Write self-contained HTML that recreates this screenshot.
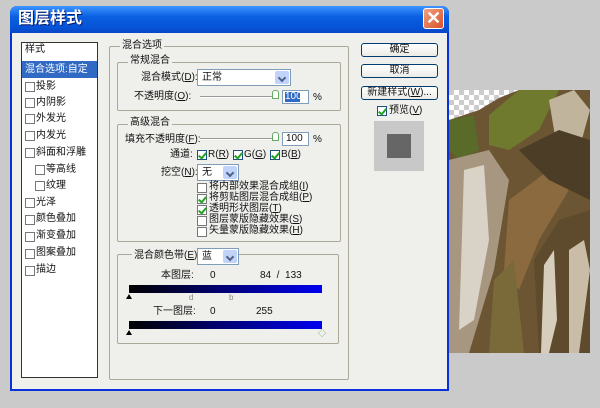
<!DOCTYPE html>
<html><head><meta charset="utf-8"><style>
*{margin:0;padding:0;box-sizing:border-box}
body{width:600px;height:408px;background:#cacaca;position:relative;overflow:hidden;font-family:"Liberation Sans","Noto Sans CJK SC",sans-serif;font-size:10px;color:#111}
.a{position:absolute;white-space:nowrap;line-height:12px}
.cb{position:absolute;width:10px;height:10px;border:1px solid #1c5180;background:#fff}
.ck::after{content:"";position:absolute;left:2px;top:0px;width:3px;height:6px;border:solid #21a121;border-width:0 2px 2px 0;transform:rotate(40deg)}
.grp{position:absolute;border:1px solid #aca899;border-radius:2px}
.lg{position:absolute;background:#efefec;padding:0 2px;line-height:12px}
.sel{position:absolute;background:#fff;border:1px solid #7f9db9}
.dd{position:absolute;right:1px;top:1px;bottom:1px;width:14px;background:#c1d3fb;border-radius:2px}
.dd::after{content:"";position:absolute;left:4px;top:4px;width:4px;height:4px;border:solid #4d6185;border-width:0 2px 2px 0;transform:rotate(45deg)}
.btn{position:absolute;left:361px;width:77px;height:14px;border:1px solid #003c74;border-radius:3px;background:linear-gradient(#fff,#ecebe6);text-align:center;line-height:12px}
.tri{position:absolute;width:0;height:0;border-left:3px solid transparent;border-right:3px solid transparent;border-bottom:5px solid #000}
</style></head><body>
<div style="position:absolute;left:10px;top:6px;width:439px;height:385px;background:#0831d9;border-radius:7px 7px 0 0"></div>
<div style="position:absolute;left:10px;top:6px;width:439px;height:27px;border-radius:7px 7px 0 0;background:linear-gradient(#3d95ff,#0a5fe0 40%,#0653d6 80%,#0846c6)"></div>
<div class="a" style="left:18px;top:10px;font-size:16px;line-height:18px;color:#fff;font-weight:bold;text-shadow:1px 1px #0a1a6a">图层样式</div>
<div style="position:absolute;left:423px;top:8px;width:21px;height:21px;border:1px solid #fff;border-radius:3px;background:linear-gradient(135deg,#f0a080,#d8522a)"></div>
<div class="a" style="left:423px;top:8px;width:21px;height:21px;line-height:21px;text-align:center;color:#fff;font-size:18px;font-weight:bold">✕</div>
<div style="position:absolute;left:12px;top:33px;width:435px;height:356px;background:#efefec"></div>
<div style="position:absolute;left:21px;top:42px;width:77px;height:336px;background:#fff;border:1px solid #333"></div>
<div class="a" style="left:25px;top:44px">样式</div>
<div style="position:absolute;left:22px;top:61px;width:75px;height:17px;background:#316ac5"></div>
<div class="a" style="left:25px;top:64px;color:#fff">混合选项:自定</div>
<div class="cb" style="left:25px;top:82px;border-color:#777"></div><div class="a" style="left:36px;top:81px">投影</div>
<div class="cb" style="left:25px;top:98px;border-color:#777"></div><div class="a" style="left:36px;top:97px">内阴影</div>
<div class="cb" style="left:25px;top:114px;border-color:#777"></div><div class="a" style="left:36px;top:113px">外发光</div>
<div class="cb" style="left:25px;top:131px;border-color:#777"></div><div class="a" style="left:36px;top:130px">内发光</div>
<div class="cb" style="left:25px;top:148px;border-color:#777"></div><div class="a" style="left:36px;top:147px">斜面和浮雕</div>
<div class="cb" style="left:35px;top:165px;border-color:#777"></div><div class="a" style="left:46px;top:164px">等高线</div>
<div class="cb" style="left:35px;top:181px;border-color:#777"></div><div class="a" style="left:46px;top:180px">纹理</div>
<div class="cb" style="left:25px;top:198px;border-color:#777"></div><div class="a" style="left:36px;top:197px">光泽</div>
<div class="cb" style="left:25px;top:215px;border-color:#777"></div><div class="a" style="left:36px;top:213px">颜色叠加</div>
<div class="cb" style="left:25px;top:232px;border-color:#777"></div><div class="a" style="left:36px;top:230px">渐变叠加</div>
<div class="cb" style="left:25px;top:249px;border-color:#777"></div><div class="a" style="left:36px;top:247px">图案叠加</div>
<div class="cb" style="left:25px;top:266px;border-color:#777"></div><div class="a" style="left:36px;top:264px">描边</div>
<div class="grp" style="left:109px;top:46px;width:240px;height:334px"></div>
<div class="lg" style="left:120px;top:40px">混合选项</div>
<div class="grp" style="left:117px;top:62px;width:224px;height:49px"></div>
<div class="lg" style="left:128px;top:55px">常规混合</div>
<div class="a" style="left:141px;top:72px">混合模式(<u>D</u>):</div>
<div class="sel" style="left:197px;top:69px;width:94px;height:17px"><div class="a" style="left:4px;top:2px">正常</div><div class="dd"></div></div>
<div class="a" style="left:134px;top:91px">不透明度(<u>O</u>):</div>
<div style="position:absolute;left:200px;top:96px;width:76px;height:2px;border-top:1px solid #999;border-bottom:1px solid #fff"></div>
<div style="position:absolute;left:272px;top:90px;width:7px;height:9px;border:1px solid #6a6;background:#fff;border-radius:3px 3px 0 0"></div>
<div class="sel" style="left:282px;top:90px;width:27px;height:14px"><div style="position:absolute;left:2px;top:1px;width:15px;height:10px;background:#316ac5"></div><div class="a" style="left:2px;top:0px;color:#fff">100</div></div>
<div class="a" style="left:313px;top:92px">%</div>
<div class="grp" style="left:117px;top:124px;width:224px;height:118px"></div>
<div class="lg" style="left:128px;top:117px">高级混合</div>
<div class="a" style="left:125px;top:134px">填充不透明度(<u>F</u>):</div>
<div style="position:absolute;left:200px;top:138px;width:76px;height:2px;border-top:1px solid #999;border-bottom:1px solid #fff"></div>
<div style="position:absolute;left:272px;top:132px;width:7px;height:9px;border:1px solid #6a6;background:#fff;border-radius:3px 3px 0 0"></div>
<div class="sel" style="left:282px;top:132px;width:27px;height:14px"><div class="a" style="left:3px;top:0px">100</div></div>
<div class="a" style="left:313px;top:134px">%</div>
<div class="a" style="left:170px;top:149px">通道:</div>
<div class="cb ck" style="left:197px;top:150px"></div><div class="a" style="left:208px;top:149px">R(<u>R</u>)</div>
<div class="cb ck" style="left:233px;top:150px"></div><div class="a" style="left:244px;top:149px">G(<u>G</u>)</div>
<div class="cb ck" style="left:270px;top:150px"></div><div class="a" style="left:281px;top:149px">B(<u>B</u>)</div>
<div class="a" style="left:161px;top:167px">挖空(<u>N</u>):</div>
<div class="sel" style="left:197px;top:164px;width:42px;height:17px"><div class="a" style="left:4px;top:2px">无</div><div class="dd"></div></div>
<div class="cb" style="left:197px;top:183px;border-color:#777"></div><div class="a" style="left:209px;top:181px">将内部效果混合成组(<u>I</u>)</div>
<div class="cb ck" style="left:197px;top:194px;border-color:#777"></div><div class="a" style="left:209px;top:192px">将剪贴图层混合成组(<u>P</u>)</div>
<div class="cb ck" style="left:197px;top:205px;border-color:#777"></div><div class="a" style="left:209px;top:203px">透明形状图层(<u>T</u>)</div>
<div class="cb" style="left:197px;top:216px;border-color:#777"></div><div class="a" style="left:209px;top:214px">图层蒙版隐藏效果(<u>S</u>)</div>
<div class="cb" style="left:197px;top:227px;border-color:#777"></div><div class="a" style="left:209px;top:225px">矢量蒙版隐藏效果(<u>H</u>)</div>
<div class="grp" style="left:117px;top:254px;width:222px;height:90px"></div>
<div class="lg" style="left:132px;top:250px">混合颜色带(<u>E</u>):</div>
<div class="sel" style="left:197px;top:248px;width:42px;height:17px"><div class="a" style="left:4px;top:2px">蓝</div><div class="dd"></div></div>
<div class="a" style="left:161px;top:270px">本图层:</div>
<div class="a" style="left:210px;top:270px">0</div>
<div class="a" style="left:260px;top:270px">84 &nbsp;/ &nbsp;133</div>
<div style="position:absolute;left:129px;top:285px;width:193px;height:8px;background:linear-gradient(90deg,#000,#0000f0)"></div>
<div class="tri" style="left:126px;top:294px"></div>
<div class="a" style="left:189px;top:292px;color:#888;font-size:8px">d</div>
<div class="a" style="left:229px;top:292px;color:#888;font-size:8px">b</div>
<div class="a" style="left:153px;top:306px">下一图层:</div>
<div class="a" style="left:210px;top:306px">0</div>
<div class="a" style="left:256px;top:306px">255</div>
<div style="position:absolute;left:129px;top:321px;width:193px;height:8px;background:linear-gradient(90deg,#000,#0000f0)"></div>
<div class="tri" style="left:126px;top:330px"></div>
<div class="a" style="left:318px;top:328px;color:#6a6;font-size:8px">◇</div>
<div class="btn" style="top:43px">确定</div>
<div class="btn" style="top:64px">取消</div>
<div class="btn" style="top:86px">新建样式(<u>W</u>)...</div>
<div class="cb ck" style="left:377px;top:106px"></div><div class="a" style="left:389px;top:105px">预览(<u>V</u>)</div>
<div style="position:absolute;left:374px;top:121px;width:50px;height:50px;background:#c8c8c8"></div>
<div style="position:absolute;left:387px;top:134px;width:24px;height:24px;background:#666"></div>
<svg style="position:absolute;left:449px;top:90px" width="141" height="263" viewBox="0 0 141 263">
<defs><pattern id="ch" width="10" height="10" patternUnits="userSpaceOnUse"><rect width="10" height="10" fill="#fff"/><rect width="5" height="5" fill="#ccc"/><rect x="5" y="5" width="5" height="5" fill="#ccc"/></pattern></defs>
<rect width="141" height="263" fill="url(#ch)"/>
<polygon points="0,30 30,20 50,8 70,0 141,0 141,263 0,263" fill="#6b5532"/>
<polygon points="40,25 70,0 110,0 90,40 60,60 40,55" fill="#6f7a2e"/>
<polygon points="0,30 25,25 30,60 10,70 0,60" fill="#5a6a28"/>
<polygon points="0,70 40,60 60,90 45,180 20,263 0,263" fill="#a79680"/>
<polygon points="15,80 35,75 40,150 25,230 10,240" fill="#d9d2c6"/>
<polygon points="60,110 100,80 120,100 90,150 70,200 55,180" fill="#8a6a3e"/>
<polygon points="100,10 125,0 141,20 130,60 110,70" fill="#c0b49c"/>
<polygon points="85,170 110,130 141,120 141,263 90,263" fill="#5e4a2c"/>
<polygon points="95,175 105,160 108,230 100,263 92,263" fill="#d6cdbd"/>
<polygon points="45,190 65,170 75,263 40,263" fill="#7a6a3a"/>
<polygon points="120,160 135,150 141,180 130,263 120,263" fill="#cabda8"/>
<polygon points="70,60 110,40 141,50 141,110 100,90" fill="#4c3e26"/>
</svg>
</body></html>
